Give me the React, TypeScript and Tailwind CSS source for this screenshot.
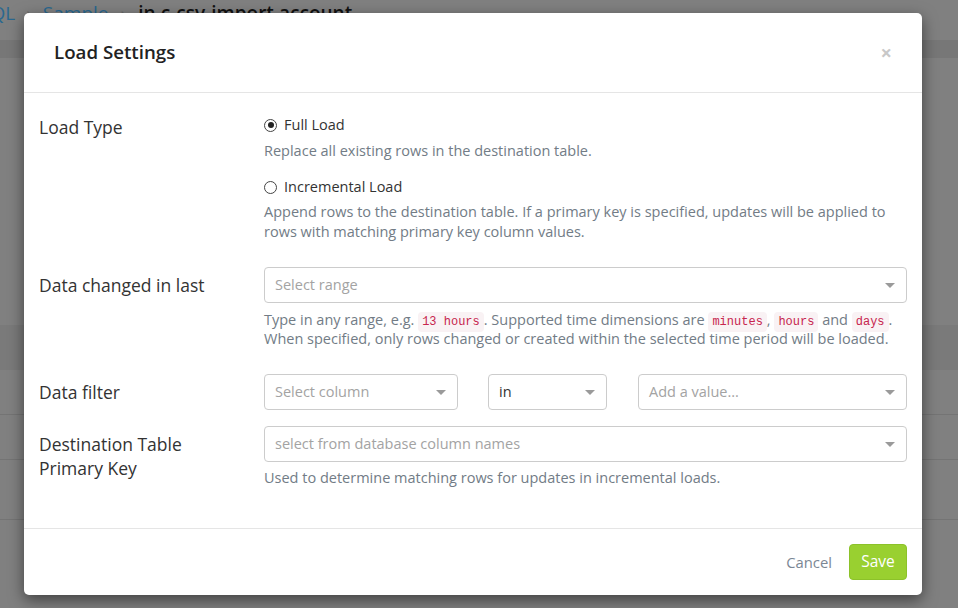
import React, { useState } from 'react';

const Caret: React.FC = () => (
  <svg width="10" height="5" viewBox="0 0 10 5" className="shrink-0">
    <path d="M0 0 L10 0 L5 5 Z" fill="#9a9a9a" />
  </svg>
);

interface SelectBoxProps {
  text: string;
  placeholder?: boolean;
  className?: string;
}

const SelectBox: React.FC<SelectBoxProps> = ({ text, placeholder = true, className = '' }) => (
  <div
    className={`h-[36px] border border-[#cccccc] rounded-[4px] bg-white flex items-center justify-between pl-[10px] pr-[11px] ${className}`}
  >
    <span className={`text-[14.5px] ${placeholder ? 'text-[#a3a3a3]' : 'text-[#333333]'}`}>{text}</span>
    <Caret />
  </div>
);

const Code: React.FC<{ children: React.ReactNode }> = ({ children }) => (
  <code className="font-['Liberation_Mono',monospace] text-[12px] leading-none text-[#c7254e] bg-[#f9f2f4] rounded-[4px] px-[4px] py-[3px]">
    {children}
  </code>
);

const Radio: React.FC<{ checked: boolean; label: string; onClick: () => void }> = ({ checked, label, onClick }) => (
  <div className="flex items-center h-[20px] cursor-pointer" onClick={onClick}>
    <span className="w-[13px] h-[13px] rounded-full border border-[#444] flex items-center justify-center">
      {checked && <span className="w-[6px] h-[6px] rounded-full bg-[#222]" />}
    </span>
    <span className="ml-[7px] text-[14.5px] text-[#333]">{label}</span>
  </div>
);

const App: React.FC = () => {
  const [loadType, setLoadType] = useState<'full' | 'incremental'>('full');

  return (
    <div className="relative w-[958px] h-[608px] overflow-hidden bg-[#808080] font-['Open_Sans','Noto_Sans',sans-serif]">
      {/* page behind the backdrop */}
      <div className="flex items-center h-[40px] pb-[14px] text-[19px] whitespace-nowrap ml-[-20px]">
        <span className="text-[#2a6890]">SQL</span>
        <span className="text-[#6a6a6a] mx-[11px]">›</span>
        <span className="text-[#2a6890]">Sample</span>
        <span className="text-[#6a6a6a] mx-[12px]">›</span>
        <span className="text-[#111] font-semibold">in.c-csv-import.account</span>
      </div>
      <div className="h-[18px] bg-[#777777]" />
      <div className="h-[267px]" />
      <div className="h-[45px] bg-[#7a7a7a]" />
      <div className="h-[45px] border-b border-[#747474]" />
      <div className="h-[45px] border-b border-[#747474]" />
      <div className="h-[60px] border-b border-[#747474]" />

      {/* modal */}
      <div className="absolute inset-0">
        <div className="ml-[24px] mt-[13px] w-[898px] bg-white rounded-[5px] shadow-[0_5px_15px_rgba(0,0,0,0.5)]">
          <div className="h-[80px] border-b border-[#e5e5e5] flex items-center justify-between pl-[30px] pr-[30px]">
            <h4 className="text-[18.7px] font-semibold text-[#222]">Load Settings</h4>
            <span className="text-[#c8c8c8] text-[20px] font-bold leading-none">×</span>
          </div>

          <div className="px-[15px] pt-[22px] pb-[40px] grid grid-cols-[225px_1fr]">
            {/* Load type */}
            <div className="text-[17.5px] leading-[24px] text-[#333]">Load Type</div>
            <div>
              <Radio checked={loadType === 'full'} label="Full Load" onClick={() => setLoadType('full')} />
              <p className="mt-[6px] text-[14.5px] leading-[20px] text-[#727c86]">
                Replace all existing rows in the destination table.
              </p>
              <div className="mt-[16px]">
                <Radio
                  checked={loadType === 'incremental'}
                  label="Incremental Load"
                  onClick={() => setLoadType('incremental')}
                />
              </div>
              <p className="mt-[5px] text-[14.5px] leading-[20px] text-[#727c86]">
                Append rows to the destination table. If a primary key is specified, updates will be applied to rows
                with matching primary key column values.
              </p>
            </div>

            {/* Data changed */}
            <div className="mt-[25px] pt-[6px] text-[17.5px] leading-[24px] text-[#333]">Data changed in last</div>
            <div className="mt-[25px]">
              <SelectBox text="Select range" />
              <p className="mt-[7px] h-[39px] text-[14.5px] leading-[19px] text-[#727c86] whitespace-nowrap">
                Type in any range, e.g. <Code>13 hours</Code>. Supported time dimensions are <Code>minutes</Code>,{' '}
                <Code>hours</Code> and <Code>days</Code>.
                <br />
                When specified, only rows changed or created within the selected time period will be loaded.
              </p>
            </div>

            {/* Data filter */}
            <div className="mt-[25px] pt-[6px] text-[17.5px] leading-[24px] text-[#333]">Data filter</div>
            <div className="mt-[25px] flex">
              <SelectBox text="Select column" className="w-[194px]" />
              <SelectBox text="in" placeholder={false} className="w-[119px] ml-[30px]" />
              <SelectBox text="Add a value..." className="flex-1 ml-[31px]" />
            </div>

            {/* Primary key */}
            <div className="mt-[16px] pt-[6px] text-[17.5px] leading-[24px] text-[#333]">
              Destination Table
              <br />
              Primary Key
            </div>
            <div className="mt-[16px]">
              <SelectBox text="select from database column names" />
              <p className="mt-[6px] text-[14.5px] leading-[20px] text-[#727c86]">
                Used to determine matching rows for updates in incremental loads.
              </p>
            </div>
          </div>

          <div className="border-t border-[#e5e5e5] flex items-center justify-end pt-[15px] pb-[15px] pr-[15px]">
            <button className="text-[14.8px] text-[#7b8794] px-[10px] h-[36px] mr-[7px]">Cancel</button>
            <button className="h-[36px] w-[58px] rounded-[4px] bg-[#99d030] border border-[#8cc22a] text-white text-[15.5px]">
              Save
            </button>
          </div>
        </div>
      </div>
    </div>
  );
};

export default App;
